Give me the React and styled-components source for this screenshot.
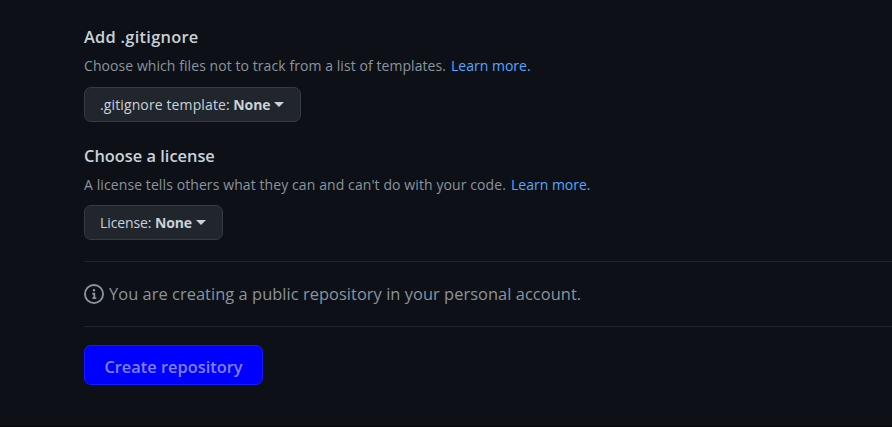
import React from 'react';
import styled, { createGlobalStyle } from 'styled-components';

const GlobalStyle = createGlobalStyle`
  * { box-sizing: border-box; }
  body {
    margin: 0;
    background: #0d1117;
    color: #c9d1d9;
    font-family: "Segoe UI", "Open Sans", "Noto Sans", sans-serif;
    overflow: hidden;
  }
`;

const Page = styled.main`
  height: 427px;
  padding: 25px 0 0 84px;
  border-bottom: 1px solid #05070b;
`;

const Section = styled.section`
  height: ${(p) => p.$height}px;
`;

const Heading = styled.h2`
  margin: 0;
  font-size: 16.4px;
  line-height: 24px;
  font-weight: 600;
  white-space: nowrap;
  letter-spacing: ${(p) => p.$tracking || 0}px;
`;

const Description = styled.p`
  display: flex;
  gap: 5px;
  margin: 5px 0 ${(p) => p.$gap}px;
  font-size: 14px;
  line-height: 24px;
  color: #8b949e;
  white-space: nowrap;
  letter-spacing: ${(p) => p.$tracking || 0}px;
`;

const Link = styled.a`
  color: #58a6ff;
  text-decoration: none;
  letter-spacing: 0;
`;

const SelectButton = styled.button`
  display: flex;
  align-items: center;
  width: ${(p) => p.$width}px;
  height: 35px;
  padding: 0 0 0 15px;
  border: 1px solid #363b42;
  border-radius: 7px;
  background: #21262d;
  color: #c9d1d9;
  font: 400 14px/24px "Segoe UI", "Open Sans", "Noto Sans", sans-serif;
  letter-spacing: ${(p) => p.$tracking || 0}px;
  white-space: nowrap;
`;

const Value = styled.strong`
  margin-left: 3.5px;
  font-weight: 700;
  letter-spacing: -0.1px;
`;

const Caret = styled.span`
  margin-left: 4px;
  border: 5px solid transparent;
  border-top-color: currentColor;
  border-bottom: 0;
`;

const Notice = styled.div`
  display: flex;
  align-items: center;
  gap: 5px;
  height: 66px;
  border: solid #21262d;
  border-width: 1px 0;
  color: #8b949e;
  font-size: 16.4px;
  white-space: nowrap;
`;

const NoticeText = styled.span`
  padding-bottom: 2px;
  letter-spacing: 0.055px;
`;

const InfoIcon = styled.svg`
  width: 20px;
  height: 20px;
  fill: currentColor;
`;

const CreateButton = styled.button`
  display: block;
  width: 179px;
  height: 40px;
  margin-top: 18px;
  padding: 4px 0 0;
  border: 1px solid #1a1aff;
  border-radius: 7px;
  background: #0000ff;
  color: #8080ff;
  font: 600 16.4px/24px "Segoe UI", "Open Sans", "Noto Sans", sans-serif;
  white-space: nowrap;
`;

export default function App() {
  return (
    <>
      <GlobalStyle />
      <Page>
        <Section $height={119}>
          <Heading $tracking={0.27}>Add .gitignore</Heading>
          <Description $gap={9} $tracking={0.07}>
            <span>Choose which files not to track from a list of templates.</span>
            <Link>Learn more.</Link>
          </Description>
          <SelectButton $width={217} $tracking={0.12}>
            <span>.gitignore template:</span>
            <Value>None</Value>
            <Caret />
          </SelectButton>
        </Section>
        <Section $height={117}>
          <Heading>Choose a license</Heading>
          <Description $gap={8} $tracking={0.095}>
            <span>A license tells others what they can and can't do with your code.</span>
            <Link>Learn more.</Link>
          </Description>
          <SelectButton $width={139} $tracking={-0.1}>
            <span>License:</span>
            <Value>None</Value>
            <Caret />
          </SelectButton>
        </Section>
        <Notice>
          <InfoIcon viewBox="0 0 16 16" aria-hidden="true">
            <path d="M0 8a8 8 0 1 1 16 0A8 8 0 0 1 0 8Zm8-6.5a6.5 6.5 0 1 0 0 13 6.5 6.5 0 0 0 0-13ZM6.5 7.75A.75.75 0 0 1 7.25 7h1a.75.75 0 0 1 .75.75v2.75h.25a.75.75 0 0 1 0 1.5h-2a.75.75 0 0 1 0-1.5h.25v-2h-.25a.75.75 0 0 1-.75-.75ZM8 6a1 1 0 1 1 0-2 1 1 0 0 1 0 2Z" />
          </InfoIcon>
          <NoticeText>You are creating a public repository in your personal account.</NoticeText>
        </Notice>
        <CreateButton>Create repository</CreateButton>
      </Page>
    </>
  );
}
